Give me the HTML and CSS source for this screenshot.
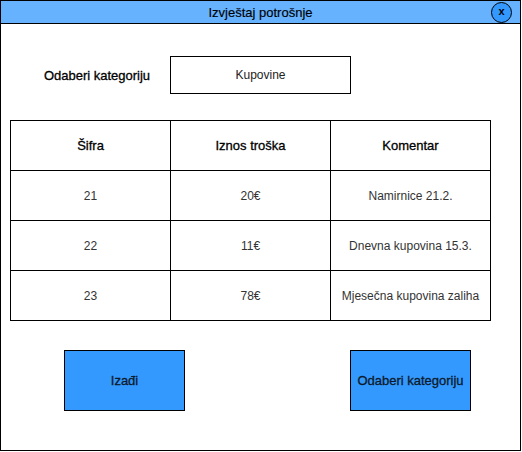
FILE: index.html
```html
<!DOCTYPE html>
<html lang="hr">
<head>
<meta charset="utf-8">
<title>Izvještaj potrošnje</title>
<link rel="stylesheet" href="styles.css">
</head>
<body>
<div class="window">
  <div class="titlebar">
    <span class="title">Izvještaj potrošnje</span>
    <span class="close">x</span>
  </div>
  <div class="category-row">
    <span class="label">Odaberi kategoriju</span>
    <div class="field">Kupovine</div>
  </div>
  <div class="grid">
    <div class="cell head">Šifra</div>
    <div class="cell head">Iznos troška</div>
    <div class="cell head">Komentar</div>
    <div class="cell">21</div>
    <div class="cell">20€</div>
    <div class="cell">Namirnice 21.2.</div>
    <div class="cell">22</div>
    <div class="cell">11€</div>
    <div class="cell">Dnevna kupovina 15.3.</div>
    <div class="cell">23</div>
    <div class="cell">78€</div>
    <div class="cell">Mjesečna kupovina zaliha</div>
  </div>
  <div class="actions">
    <div class="btn">Izađi</div>
    <div class="btn">Odaberi kategoriju</div>
  </div>
</div>
</body>
</html>
```
FILE: styles.css
```css
* { box-sizing: border-box; }
html, body { margin: 0; padding: 0; background: #fff; }
body {
  font-family: "Liberation Sans", Arial, Helvetica, sans-serif;
  font-size: 12px;
  color: #333;
}
.window {
  width: 521px;
  height: 451px;
  border: 1px solid #000;
  background: #fff;
}
.titlebar {
  position: relative;
  height: 23px;
  background: #66b2ff;
  border-bottom: 1px solid #000;
  display: flex;
  align-items: center;
  justify-content: center;
}
.title {
  color: #000;
  font-size: 13px;
  padding-top: 1px;
  -webkit-text-stroke: 0.15px #000;
}
.close {
  position: absolute;
  top: 1px;
  right: 8px;
  width: 21px;
  height: 21px;
  border: 1px solid #000;
  border-radius: 50%;
  background: #3399ff;
  display: flex;
  align-items: center;
  justify-content: center;
  font-weight: bold;
  font-size: 11px;
  color: #000;
  line-height: 1;
  padding-bottom: 2px;
}
.category-row {
  margin-top: 32px;
  padding-left: 31px;
  display: flex;
  align-items: center;
  height: 38px;
}
.label {
  width: 130px;
  text-align: center;
  font-size: 13px;
  color: #000;
  -webkit-text-stroke: 0.3px #000;
}
.field {
  margin-left: 8px;
  width: 181px;
  height: 38px;
  border: 1px solid #000;
  display: flex;
  align-items: center;
  justify-content: center;
  color: #222;
}
.grid {
  margin: 26px 0 0 9px;
  display: grid;
  grid-template-columns: 160px 160px 160px;
  grid-auto-rows: 50px;
  width: 481px;
  border-left: 1px solid #000;
  border-top: 1px solid #000;
}
.cell {
  border-right: 1px solid #000;
  border-bottom: 1px solid #000;
  display: flex;
  align-items: center;
  justify-content: center;
  color: #333;
}
.cell.head {
  font-size: 13px;
  color: #000;
  -webkit-text-stroke: 0.3px #000;
}
.actions {
  margin-top: 29px;
  padding-left: 63px;
  display: flex;
  gap: 165px;
}
.btn {
  width: 121px;
  height: 61px;
  border: 1px solid #000;
  background: #3399ff;
  display: flex;
  align-items: center;
  justify-content: center;
  font-size: 13px;
  color: #0d1a2b;
  -webkit-text-stroke: 0.3px #0d1a2b;
}
```
